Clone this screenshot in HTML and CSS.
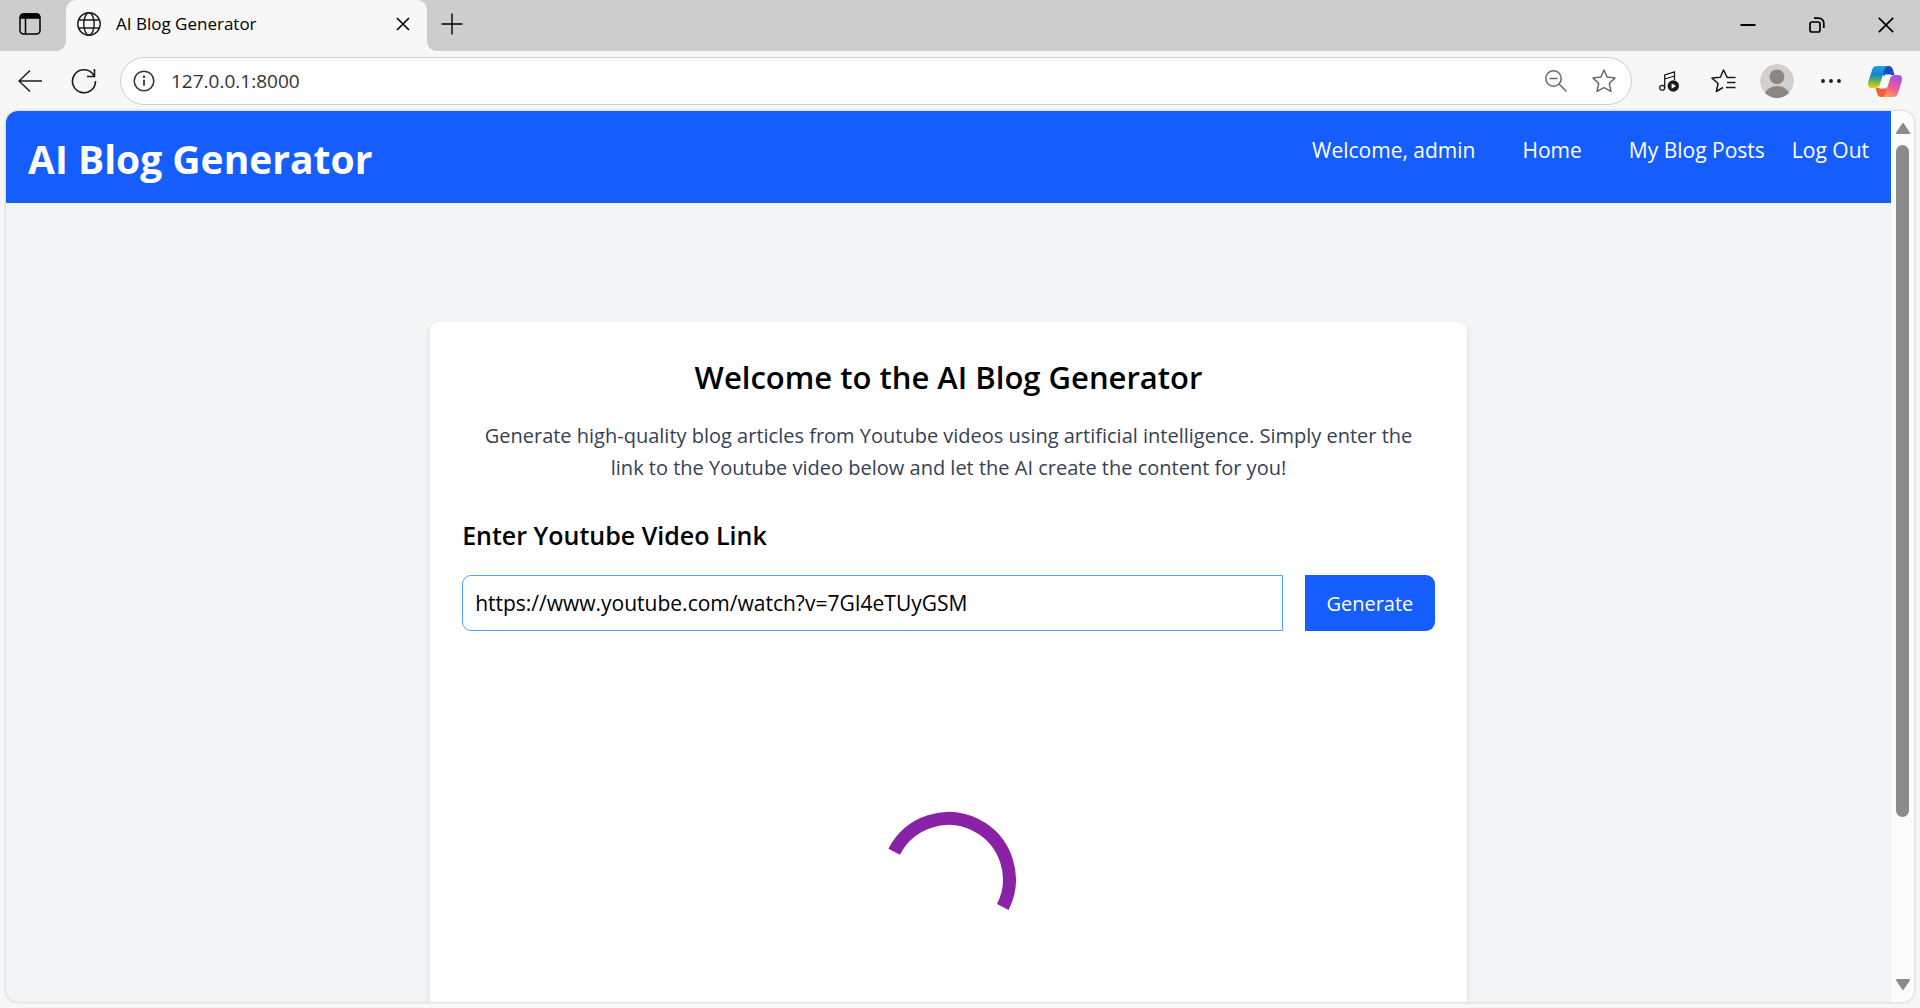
FILE: index.html
```html
<!DOCTYPE html>
<html lang="en">
<head>
<meta charset="utf-8">
<title>AI Blog Generator</title>
<link rel="stylesheet" href="styles.css">
</head>
<body>
<div class="browser">
  <div class="tabstrip">
    <button class="icon-btn workspaces" aria-label="Tab actions">
      <svg width="22" height="22" viewBox="0 0 22 22" fill="none" stroke="#000" stroke-width="1.5"><rect x="1" y="1" width="20" height="20" rx="3.5"/><path d="M1.500 5V4a3 3 0 0 1 3-3h13a3 3 0 0 1 3 3v1z" fill="#000"/><path d="M6.500 5v16"/></svg>
    </button>
    <div class="tab">
      <svg width="24" height="24" viewBox="0 0 24 24" fill="none" stroke="#1b1b1b" stroke-width="1.4"><circle cx="12" cy="12" r="11.2"/><ellipse cx="12" cy="12" rx="5.2" ry="11.2"/><path d="M1.800 8h20.400M1.800 16h20.400"/></svg>
      <span class="tab-title">AI Blog Generator</span>
      <button class="icon-btn" aria-label="Close tab">
        <svg width="14" height="14" viewBox="0 0 14 14" stroke="#000" stroke-width="1.6"><path d="M1 1l12 12M13 1L1 13"/></svg>
      </button>
    </div>
    <button class="icon-btn new-tab" aria-label="New tab">
      <svg width="22" height="22" viewBox="0 0 22 22" stroke="#000" stroke-width="1.4"><path d="M11 .5v21M.5 11h21"/></svg>
    </button>
    <div class="window-controls">
      <button class="icon-btn" aria-label="Minimize"><svg width="16" height="16" viewBox="0 0 16 16" stroke="#000" stroke-width="2"><path d="M.5 8h15"/></svg></button>
      <button class="icon-btn" aria-label="Restore"><svg width="16" height="16" viewBox="0 0 16 16" fill="none" stroke="#000" stroke-width="1.7"><rect x="1" y="5" width="10" height="10" rx="2"/><path d="M5 1.200h4.800a5 5 0 0 1 5 5V11"/></svg></button>
      <button class="icon-btn" aria-label="Close"><svg width="16" height="16" viewBox="0 0 16 16" stroke="#000" stroke-width="1.7"><path d="M.8.8l14.400 14.400M15.200.8L.8 15.200"/></svg></button>
    </div>
  </div>

  <div class="toolbar">
    <button class="icon-btn back" aria-label="Back"><svg width="24" height="24" viewBox="0 0 24 24" fill="none" stroke="#1b1b1b" stroke-width="1.5"><path d="M24 12H1M12 1.500L1 12l11 10.500"/></svg></button>
    <button class="icon-btn reload" aria-label="Refresh"><svg width="26" height="26" viewBox="0 0 26 26" fill="none" stroke="#1b1b1b" stroke-width="1.6"><path d="M24.500 13A11.500 11.500 0 1 1 21.500 5.500L23.500 8.500M23.500 1v7.500H16"/></svg></button>
    <div class="address">
      <svg width="22" height="22" viewBox="0 0 22 22" fill="none" stroke="#333" stroke-width="1.5"><circle cx="11" cy="11" r="9.800"/><path d="M11 9.800v6" stroke-width="1.8"/><circle cx="11" cy="6.800" r="1.200" fill="#333" stroke="none"/></svg>
      <input class="url" type="text" value="127.0.0.1:8000" aria-label="Address">
      <button class="icon-btn" aria-label="Zoom"><svg width="22" height="22" viewBox="0 0 22 22" fill="none" stroke="#6b6b6b" stroke-width="1.5"><circle cx="8.500" cy="8.500" r="7.700"/><path d="M4.500 8.500h8M14 14l7.500 7.500"/></svg></button>
      <button class="icon-btn" aria-label="Favourite"><svg width="24" height="24" viewBox="0 0 24 24" fill="none" stroke="#6b6b6b" stroke-width="1.5" stroke-linejoin="round"><path d="M12 1l3.200 7.100 7.900.9-5.800 5.400 1.700 8L12 18.600 5 22.400l1.700-8L.9 9l7.900-.9z"/></svg></button>
    </div>
    <div class="tools">
      <button class="icon-btn" aria-label="Media"><svg width="20" height="21" viewBox="0 0 20 21" fill="none" stroke="#1b1b1b" stroke-width="1.300"><circle cx="3.200" cy="16.800" r="2.500"/><path d="M5.700 16.800V4L15.500 1v8M5.700 8l9.800-3"/><circle cx="14.300" cy="15" r="5.700" fill="#1b1b1b" stroke="none"/><path d="M12.600 12.300v5.400l4.500-2.700z" fill="#fff" stroke="none"/></svg></button>
      <button class="icon-btn" aria-label="Favourites"><svg width="25" height="24" viewBox="0 0 25 24" fill="none" stroke="#1b1b1b" stroke-width="1.500" stroke-linejoin="round"><path d="M24.500 8.400h-8.300L12.500 1 9.300 8.200 1 9.100l6.100 5.400-1.800 8L12 18.500M16 13.400h8.500M15 18.400h9.500"/></svg></button>
      <button class="icon-btn" aria-label="Profile"><svg width="34" height="34" viewBox="0 0 34 34"><defs><clipPath id="disc"><circle cx="17" cy="17" r="17"/></clipPath></defs><g clip-path="url(#disc)"><circle cx="17" cy="17" r="17" fill="#d2d0ce"/><circle cx="17" cy="12.800" r="7.400" fill="#8c8682"/><ellipse cx="17" cy="32" rx="12.500" ry="10" fill="#8c8682"/></g></svg></button>
      <button class="icon-btn" aria-label="Settings and more"><svg width="20" height="4" viewBox="0 0 20 4" fill="#1b1b1b"><circle cx="2" cy="2" r="1.900"/><circle cx="10" cy="2" r="1.900"/><circle cx="18" cy="2" r="1.900"/></svg></button>
      <button class="icon-btn" aria-label="Copilot"><svg width="34" height="31" viewBox="0 0 34 31">
        <defs>
          <linearGradient id="cool" x1="0" y1="0" x2="0" y2="1"><stop offset="0" stop-color="#1ba5e8"/><stop offset=".4" stop-color="#1584cf"/><stop offset=".7" stop-color="#6cb84c"/><stop offset="1" stop-color="#f5d000"/></linearGradient>
          <linearGradient id="warm" x1=".7" y1="0" x2=".3" y2="1"><stop offset="0" stop-color="#a44ff0"/><stop offset=".5" stop-color="#e8589c"/><stop offset="1" stop-color="#ff9a5c"/></linearGradient>
        </defs>
        <path d="M12 0h9c2 0 3 1 4 4l1.500 5h-5c-3 0-4 1-5 3z" fill="#1a49cc"/>
        <path d="M22 31h-9c-2 0-3-1-4-4l-1.500-5h5c3 0 4-1 5-3z" fill="#f4603c"/>
        <path d="M17 8.500h6L17.500 22.500h-6z" fill="#fff"/>
        <path d="M9 0h11c-3 1-3.500 3-4.500 7L12 18c-1 3-2 4-5 4H4C0 22-.5 19 .5 15L4 4C5 1 6 0 9 0z" fill="url(#cool)"/>
        <path d="M25 31H14c3-1 3.500-3 4.500-7L22 13c1-3 2-4 5-4h3c4 0 4.500 3 3.500 7L30 27c-1 3-2 4-5 4z" fill="url(#warm)"/>
      </svg></button>
    </div>
  </div>

  <div class="viewport">
    <div class="page">
      <header class="site-header">
        <h1 class="brand">AI Blog Generator</h1>
        <nav class="nav">
          <span class="welcome">Welcome, admin</span>
          <a class="home" href="#">Home</a>
          <a class="posts" href="#">My Blog Posts</a>
          <a href="#">Log Out</a>
        </nav>
      </header>
      <main class="card">
        <h2 class="card-title">Welcome to the AI Blog Generator</h2>
        <p class="lead">Generate high-quality blog articles from Youtube videos using artificial intelligence. Simply enter the link to the Youtube video below and let the AI create the content for you!</p>
        <label class="field-label" for="link">Enter Youtube Video Link</label>
        <form class="form">
          <input class="link-input" id="link" type="text" value="https://www.youtube.com/watch?v=7GI4eTUyGSM">
          <button class="generate" type="button">Generate</button>
        </form>
        <div class="loader" role="status" aria-label="Loading">
          <svg width="136" height="136" viewBox="0 0 136 136" fill="none" stroke="#8a22a8" stroke-width="13"><path d="M13.200 41.800A60.500 60.500 0 0 1 121.800 97"/></svg>
        </div>
      </main>
    </div>
    <div class="scrollbar">
      <svg width="14" height="11" viewBox="0 0 14 11" fill="#8b8b8b" stroke="#8b8b8b" stroke-width="2" stroke-linejoin="round"><path d="M7 1l6 9H1z"/></svg>
      <div class="track"><div class="thumb"></div></div>
      <svg width="14" height="11" viewBox="0 0 14 11" fill="#8b8b8b" stroke="#8b8b8b" stroke-width="2" stroke-linejoin="round"><path d="M7 10L1 1h12z"/></svg>
    </div>
  </div>
</div>
</body>
</html>
```
FILE: styles.css
```css
* { box-sizing: border-box; }

body {
  margin: 0;
  font-family: "Segoe UI", "Open Sans", "Noto Sans", sans-serif;
  color: #000;
}

h1, h2, p { margin: 0; }
a { color: inherit; text-decoration: none; }
svg { display: block; flex: none; }
button, input { font: inherit; }

.browser {
  display: flex;
  flex-direction: column;
  height: 100vh;
  overflow: hidden;
  background: #f7f7f7;
}

.icon-btn {
  display: flex;
  align-items: center;
  justify-content: center;
  padding: 0;
  border: 0;
  background: none;
}

/* Tab strip */
.tabstrip {
  display: flex;
  flex: none;
  align-items: stretch;
  height: 51px;
  background: #cdcdcd;
}

.workspaces { width: 60px; padding-bottom: 3px; }

.tab {
  position: relative;
  display: flex;
  align-items: center;
  width: 361px;
  margin-left: 6px;
  padding: 0 17px 3px 11px;
  border-radius: 10px 10px 0 0;
  background: #f7f7f7;
}

.tab::before,
.tab::after {
  content: "";
  position: absolute;
  bottom: 0;
  width: 10px;
  height: 10px;
}

.tab::before { left: -10px; background: radial-gradient(circle at 0 0, #cdcdcd 10px, #f7f7f7 10px); }
.tab::after { right: -10px; background: radial-gradient(circle at 100% 0, #cdcdcd 10px, #f7f7f7 10px); }

.tab-title {
  flex: 1;
  margin-left: 15px;
  padding-bottom: 2px;
  font-size: 17px;
}

.new-tab { width: 50px; padding-bottom: 4px; }

.window-controls {
  display: flex;
  margin-left: auto;
}

.window-controls .icon-btn { width: 69px; padding-bottom: 1px; }

/* Toolbar */
.toolbar {
  display: flex;
  flex: none;
  align-items: center;
  height: 60px;
  padding: 0 8px 0 18px;
}

.reload { margin-left: 29px; }

.address {
  display: flex;
  flex: 1;
  align-items: center;
  gap: 25px;
  height: 48px;
  margin-left: 23px;
  padding: 0 15px 0 12px;
  border: 1px solid #cfcfcf;
  border-radius: 24px;
  background: #fdfdfd;
}

.url {
  flex: 1;
  min-width: 0;
  margin-left: -9px;
  padding: 0;
  border: 0;
  outline: 0;
  background: none;
  color: #333;
  font-size: 19px;
}

.tools {
  display: flex;
  align-items: center;
  margin-left: 10px;
}

.tools .icon-btn { width: 54px; }

/* Page area */
.viewport {
  display: flex;
  flex: 1;
  min-height: 0;
  margin: 0 6px 6px;
  overflow: hidden;
  border-radius: 12px;
  background: #f3f4f6;
  box-shadow: 0 0 3px rgba(0, 0, 0, 0.25);
}

.page {
  flex: 1;
  min-width: 0;
  overflow: hidden;
}

.site-header {
  display: flex;
  align-items: flex-start;
  justify-content: space-between;
  padding: 22px 22px 18px;
  background: #155dfc;
  color: #fff;
}

.brand {
  font-size: 39px;
  font-weight: 700;
  line-height: 52px;
}

.nav {
  display: flex;
  font-size: 21px;
  line-height: 34px;
}

.welcome, .home { margin-right: 47px; }
.posts { margin-right: 27px; }

.card {
  width: 55%;
  height: 900px;
  margin: 119px auto 0;
  padding: 32px;
  border-radius: 9px;
  background: #fff;
  box-shadow: 0 4px 7px rgba(0, 0, 0, 0.1);
}

.card-title {
  margin-bottom: 20px;
  font-size: 31px;
  font-weight: 600;
  line-height: 46px;
  text-align: center;
}

.lead {
  margin-bottom: 32px;
  padding: 0 8px;
  color: #364153;
  font-size: 20px;
  line-height: 32px;
  text-align: center;
}

.field-label {
  display: block;
  margin-bottom: 21px;
  font-size: 25px;
  font-weight: 600;
  line-height: 38px;
}

.form {
  display: flex;
  gap: 22px;
}

.link-input {
  flex: 1;
  min-width: 0;
  height: 56px;
  padding: 0 12px;
  border: 1px solid #51a2ff;
  border-radius: 9px 0 0 9px;
  outline: 0;
  font-size: 21px;
}

.generate {
  width: 130px;
  border: 0;
  border-radius: 0 9px 9px 0;
  background: #155dfc;
  color: #fff;
  font-size: 20px;
}

.loader {
  display: flex;
  justify-content: center;
  margin-top: 179px;
}

/* Scrollbar */
.scrollbar {
  display: flex;
  flex: none;
  flex-direction: column;
  align-items: center;
  gap: 11px;
  width: 23px;
  padding: 12px 0;
  background: #fcfcfc;
}

.track { flex: 1; }

.thumb {
  width: 13px;
  height: calc(82% - 3px);
  border-radius: 7px;
  background: #8b8b8b;
}
```
